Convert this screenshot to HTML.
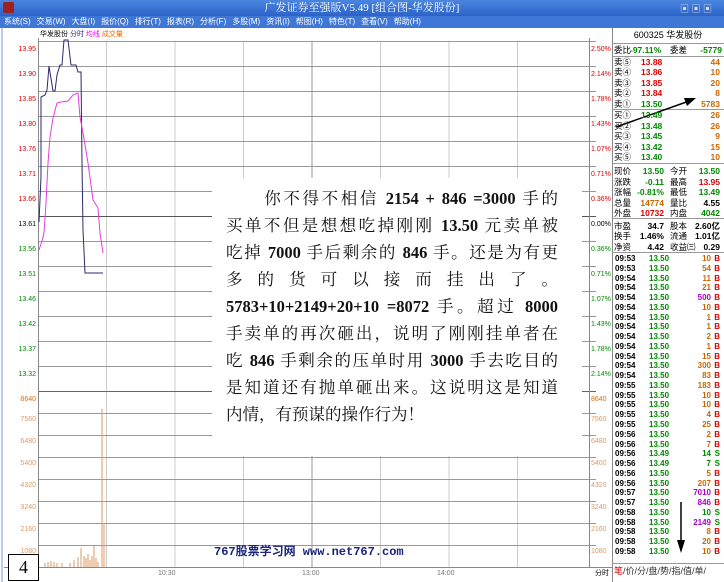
<!DOCTYPE html>
<html><head><meta charset="utf-8"><style>
*{margin:0;padding:0;box-sizing:border-box}
body{width:724px;height:582px;overflow:hidden;background:#fff;font-family:"Liberation Sans","Noto Sans CJK SC",sans-serif;position:relative}
.a{position:absolute;white-space:nowrap}
#title{left:0;top:0;width:724px;height:16px;background:linear-gradient(#4a86e0,#2c62c8);color:#fff;font-size:11px;text-align:center;line-height:16px;font-family:"Liberation Serif","Noto Serif CJK SC",serif}
#menu{left:0;top:16px;width:724px;height:12px;background:#3f77d6;color:#fff;font-size:8px;line-height:12px;padding-left:4px;word-spacing:0}
#menu span{margin-right:6px}
.lab{font-size:7px;line-height:8px}
.rp{font-size:8.5px;line-height:10px;font-weight:bold}
.r{color:#d00}.g{color:#080}.k{color:#000}.o{color:#c60}.p{color:#a0c}
#txt{left:212px;top:178px;width:370px;height:278px;background:#fff;padding:7px 0 0 14px}
#txt div{width:332px;height:27px;line-height:27px;font-size:16.5px;font-family:"Liberation Serif","Noto Serif CJK SC",serif;text-align:justify;text-align-last:justify;color:#111}
#txt b{font-weight:bold}
</style></head><body>
<div class="a" id="title">广发证券至强版V5.49 [组合图-华发股份]</div>
<div class="a" style="left:3px;top:2px;width:11px;height:11px;background:#a02020;border-radius:2px"></div>
<div class="a" style="left:680px;top:2px;width:40px;height:12px;color:#ddd;font-size:9px">▣ ▣ ▣</div>
<div class="a" id="menu"><span>系统(S)</span><span>交易(W)</span><span>大盘(I)</span><span>报价(Q)</span><span>排行(T)</span><span>报表(R)</span><span>分析(F)</span><span>多股(M)</span><span>资讯(I)</span><span>帮图(H)</span><span>特色(T)</span><span>查看(V)</span><span>帮助(H)</span></div>

<svg class="a" style="left:0;top:28px" width="612" height="554" viewBox="0 28 612 554">
<rect x="0" y="28" width="612" height="554" fill="#fff"/>
<line x1="2" y1="28" x2="2" y2="582" stroke="#7a9ad0"/>
<g stroke="#ccc" stroke-width="1">
<line x1="106.5" y1="41" x2="106.5" y2="567"/><line x1="175" y1="41" x2="175" y2="567"/><line x1="243.5" y1="41" x2="243.5" y2="567"/><line x1="312" y1="41" x2="312" y2="567" stroke="#999"/><line x1="380.5" y1="41" x2="380.5" y2="567"/><line x1="449" y1="41" x2="449" y2="567"/><line x1="517.5" y1="41" x2="517.5" y2="567"/>
</g>
<g stroke="#999" stroke-width="1">
<line x1="38" y1="41.5" x2="596" y2="41.5"/><line x1="38" y1="66.5" x2="596" y2="66.5"/><line x1="38" y1="91.5" x2="596" y2="91.5"/><line x1="38" y1="116.5" x2="596" y2="116.5"/><line x1="38" y1="141.5" x2="596" y2="141.5"/><line x1="38" y1="166.5" x2="596" y2="166.5"/><line x1="38" y1="191.5" x2="596" y2="191.5"/><line x1="38" y1="216.5" x2="596" y2="216.5" stroke="#555"/><line x1="38" y1="241.5" x2="596" y2="241.5"/><line x1="38" y1="266.5" x2="596" y2="266.5"/><line x1="38" y1="291.5" x2="596" y2="291.5"/><line x1="38" y1="316.5" x2="596" y2="316.5"/><line x1="38" y1="341.5" x2="596" y2="341.5"/><line x1="38" y1="366.5" x2="596" y2="366.5"/><line x1="38" y1="391.5" x2="596" y2="391.5" stroke="#666"/>
<line x1="38" y1="413.5" x2="596" y2="413.5"/><line x1="38" y1="435.5" x2="596" y2="435.5"/><line x1="38" y1="457.5" x2="596" y2="457.5"/><line x1="38" y1="479.5" x2="596" y2="479.5"/><line x1="38" y1="501.5" x2="596" y2="501.5"/><line x1="38" y1="523.5" x2="596" y2="523.5"/><line x1="38" y1="545.5" x2="596" y2="545.5"/>
</g>
<line x1="38.5" y1="38" x2="38.5" y2="567" stroke="#888"/>
<line x1="589.5" y1="38" x2="589.5" y2="567" stroke="#888"/>
<line x1="4" y1="567.5" x2="612" y2="567.5" stroke="#888"/>
<polyline fill="none" stroke="#2a2a6a" stroke-width="1" points="39,222 41,177 41,97 45,95 47,90 49,66 53,91 55,91 57,75 60,65 62,65 64,40 68,40 71,65 76,65 78,72 81,72 82,163 83,230 85,273 103,273"/>
<polyline fill="none" stroke="#e040e0" stroke-width="1" points="39,250 42,241 44,233 46,203 48,163 50,137 53,118 57,103 61,102 68,101 73,95 78,93 80,117 83,133 88,163 93,200 98,208 100,233 103,253"/>
<g stroke="#d96" stroke-width="1">
<line x1="45" y1="567" x2="45" y2="563"/><line x1="48" y1="567" x2="48" y2="562"/><line x1="51" y1="567" x2="51" y2="561"/><line x1="54" y1="567" x2="54" y2="562"/><line x1="57" y1="567" x2="57" y2="563"/><line x1="62" y1="567" x2="62" y2="563"/><line x1="70" y1="567" x2="70" y2="563"/><line x1="74" y1="567" x2="74" y2="560"/><line x1="78" y1="567" x2="78" y2="557"/><line x1="81" y1="567" x2="81" y2="548"/><line x1="84" y1="567" x2="84" y2="556"/><line x1="86" y1="567" x2="86" y2="558"/><line x1="88" y1="567" x2="88" y2="554"/><line x1="90" y1="567" x2="90" y2="560"/><line x1="92" y1="567" x2="92" y2="556"/><line x1="94" y1="567" x2="94" y2="545"/><line x1="96" y1="567" x2="96" y2="558"/><line x1="98" y1="567" x2="98" y2="562"/>
<line x1="102" y1="567" x2="102" y2="409"/><line x1="104" y1="567" x2="104" y2="523"/>
</g>
</svg>

<div class="a lab" style="left:40px;top:31px;font-size:7px;color:#000">华发股份 <span style="color:#22a">分时</span> <span style="color:#e0e">均线</span> <span style="color:#e60">成交量</span></div>
<div class="a lab" style="left:0;top:37px;width:36px;text-align:right;line-height:25px">
<div class="r">13.95</div><div class="r">13.90</div><div class="r">13.85</div><div class="r">13.80</div><div class="r">13.76</div><div class="r">13.71</div><div class="r">13.66</div><div class="k">13.61</div><div class="g">13.56</div><div class="g">13.51</div><div class="g">13.46</div><div class="g">13.42</div><div class="g">13.37</div><div class="g">13.32</div><div class="r" style="color:#e60">8640</div></div>
<div class="a lab" style="left:0;top:409px;width:36px;text-align:right;line-height:22px;color:#d96">
<div>7560</div><div>6480</div><div>5400</div><div>4320</div><div>3240</div><div>2160</div><div>1080</div></div>
<div class="a lab" style="left:591px;top:37px;line-height:25px">
<div class="r">2.50%</div><div class="r">2.14%</div><div class="r">1.78%</div><div class="r">1.43%</div><div class="r">1.07%</div><div class="r">0.71%</div><div class="r">0.36%</div><div class="k">0.00%</div><div class="g">0.36%</div><div class="g">0.71%</div><div class="g">1.07%</div><div class="g">1.43%</div><div class="g">1.78%</div><div class="g">2.14%</div><div style="color:#e60">8640</div></div>
<div class="a lab" style="left:591px;top:409px;line-height:22px;color:#d96">
<div>7560</div><div>6480</div><div>5400</div><div>4320</div><div>3240</div><div>2160</div><div>1080</div></div>
<div class="a lab" style="left:20px;top:570px;color:#777">09:30</div>
<div class="a lab" style="left:158px;top:570px;color:#777">10:30</div>
<div class="a lab" style="left:302px;top:570px;color:#777">13:00</div>
<div class="a lab" style="left:437px;top:570px;color:#777">14:00</div>
<div class="a lab" style="left:595px;top:570px;color:#000">分时</div>

<div class="a" id="txt">
<div>&#12288;&#12288;你不得不相信 <b>2154 + 846 =3000</b> 手的</div>
<div>买单不但是想想吃掉刚刚 <b>13.50</b> 元卖单被</div>
<div>吃掉 <b>7000</b> 手后剩余的 <b>846</b> 手。还是为有更</div>
<div>多 的 货 可 以 接 而 挂 出 了 。</div>
<div><b>5783+10+2149+20+10 =8072</b> 手。超过 <b>8000</b></div>
<div>手卖单的再次砸出，说明了刚刚挂单者在</div>
<div>吃 <b>846</b> 手剩余的压单时用 <b>3000</b> 手去吃目的</div>
<div>是知道还有抛单砸出来。这说明这是知道</div>
<div style="text-align-last:left">内情，有预谋的操作行为！</div>
</div>

<div class="a" style="left:8px;top:554px;width:31px;height:27px;border:1px solid #000;background:#fff;font-family:'Liberation Serif',serif;font-size:18px;text-align:center;line-height:25px">4</div>
<div class="a" style="left:214px;top:542px;font-size:12px;font-weight:bold;color:#1a237e;font-family:'Liberation Mono','Noto Sans CJK SC',monospace">767股票学习网 www.net767.com</div>

<!-- right panel -->
<div class="a" style="left:612px;top:28px;width:112px;height:554px;border-left:1px solid #888;background:#fff"></div>
<div class="a rp" style="left:612px;top:30px;width:112px;text-align:center;font-weight:normal;font-size:9px">600325 华发股份</div>
<svg class="a" style="left:612px;top:28px" width="112" height="554">
<g stroke="#999"><line x1="0" y1="15.5" x2="112" y2="15.5"/><line x1="0" y1="28.5" x2="112" y2="28.5"/><line x1="0" y1="81.5" x2="112" y2="81.5"/><line x1="0" y1="135.5" x2="112" y2="135.5"/><line x1="0" y1="190.5" x2="112" y2="190.5"/><line x1="0" y1="224.5" x2="112" y2="224.5"/><line x1="0" y1="535.5" x2="112" y2="535.5"/></g>
<line x1="4" y1="99" x2="80" y2="72" stroke="#000" stroke-width="1.5"/><polygon points="84,70 72,70 75,78" fill="#000"/>
<line x1="69" y1="474" x2="69" y2="518" stroke="#000" stroke-width="1.5"/><polygon points="69,525 65,512 73,512" fill="#000"/>
</svg>
<div class="a rp" style="left:614px;top:45px;width:108px">
<div style="position:relative;height:10px"><span style="font-weight:normal">委比</span><span class="g" style="position:absolute;left:16px">-97.11%</span><span style="position:absolute;left:56px;font-weight:normal">委差</span><span class="g" style="position:absolute;right:0">-5779</span></div>
</div>
<div class="a rp" style="left:614px;top:57px;width:106px">
<div style="position:relative;height:10.4px"><span style="font-weight:normal">卖⑤</span><span class="r" style="position:absolute;left:27px">13.88</span><span class="o" style="position:absolute;right:0">44</span></div>
<div style="position:relative;height:10.4px"><span style="font-weight:normal">卖④</span><span class="r" style="position:absolute;left:27px">13.86</span><span class="o" style="position:absolute;right:0">10</span></div>
<div style="position:relative;height:10.4px"><span style="font-weight:normal">卖③</span><span class="r" style="position:absolute;left:27px">13.85</span><span class="o" style="position:absolute;right:0">20</span></div>
<div style="position:relative;height:10.4px"><span style="font-weight:normal">卖②</span><span class="r" style="position:absolute;left:27px">13.84</span><span class="o" style="position:absolute;right:0">8</span></div>
<div style="position:relative;height:10.4px"><span style="font-weight:normal">卖①</span><span class="g" style="position:absolute;left:27px">13.50</span><span class="o" style="position:absolute;right:0">5783</span></div>
</div>
<div class="a rp" style="left:614px;top:110px;width:106px">
<div style="position:relative;height:10.6px"><span style="font-weight:normal">买①</span><span class="g" style="position:absolute;left:27px">13.49</span><span class="o" style="position:absolute;right:0">26</span></div>
<div style="position:relative;height:10.6px"><span style="font-weight:normal">买②</span><span class="g" style="position:absolute;left:27px">13.48</span><span class="o" style="position:absolute;right:0">26</span></div>
<div style="position:relative;height:10.6px"><span style="font-weight:normal">买③</span><span class="g" style="position:absolute;left:27px">13.45</span><span class="o" style="position:absolute;right:0">9</span></div>
<div style="position:relative;height:10.6px"><span style="font-weight:normal">买④</span><span class="g" style="position:absolute;left:27px">13.42</span><span class="o" style="position:absolute;right:0">15</span></div>
<div style="position:relative;height:10.6px"><span style="font-weight:normal">买⑤</span><span class="g" style="position:absolute;left:27px">13.40</span><span class="o" style="position:absolute;right:0">10</span></div>
</div>
<div class="a rp" style="left:614px;top:166px;width:106px">
<div style="position:relative;height:10.6px"><span style="font-weight:normal">现价</span><span class="g" style="position:absolute;right:56px">13.50</span><span style="position:absolute;left:56px;font-weight:normal">今开</span><span class="g" style="position:absolute;right:0">13.50</span></div>
<div style="position:relative;height:10.6px"><span style="font-weight:normal">涨跌</span><span class="g" style="position:absolute;right:56px">-0.11</span><span style="position:absolute;left:56px;font-weight:normal">最高</span><span class="r" style="position:absolute;right:0">13.95</span></div>
<div style="position:relative;height:10.6px"><span style="font-weight:normal">涨幅</span><span class="g" style="position:absolute;right:56px">-0.81%</span><span style="position:absolute;left:56px;font-weight:normal">最低</span><span class="g" style="position:absolute;right:0">13.49</span></div>
<div style="position:relative;height:10.6px"><span style="font-weight:normal">总量</span><span class="o" style="position:absolute;right:56px">14774</span><span style="position:absolute;left:56px;font-weight:normal">量比</span><span class="k" style="position:absolute;right:0">4.55</span></div>
<div style="position:relative;height:10.6px"><span style="font-weight:normal">外盘</span><span class="r" style="position:absolute;right:56px">10732</span><span style="position:absolute;left:56px;font-weight:normal">内盘</span><span class="g" style="position:absolute;right:0">4042</span></div>
</div>
<div class="a rp" style="left:614px;top:221px;width:106px">
<div style="position:relative;height:10.3px"><span style="font-weight:normal">市盈</span><span style="position:absolute;right:56px">34.7</span><span style="position:absolute;left:56px;font-weight:normal">股本</span><span style="position:absolute;right:0">2.60亿</span></div>
<div style="position:relative;height:10.3px"><span style="font-weight:normal">换手</span><span style="position:absolute;right:56px">1.46%</span><span style="position:absolute;left:56px;font-weight:normal">流通</span><span style="position:absolute;right:0">1.01亿</span></div>
<div style="position:relative;height:10.3px"><span style="font-weight:normal">净资</span><span style="position:absolute;right:56px">4.42</span><span style="position:absolute;left:56px;font-weight:normal">收益㈢</span><span style="position:absolute;right:0">0.29</span></div>
</div>
<div class="a rp" id="ticks" style="left:615px;top:254px;width:105px;font-size:8px;line-height:9.77px"></div>
<script>
var t=[["09:53","13.50","10","B","o"],["09:53","13.50","54","B","o"],["09:54","13.50","11","B","o"],["09:54","13.50","21","B","o"],["09:54","13.50","500","B","p"],["09:54","13.50","10","B","o"],["09:54","13.50","1","B","o"],["09:54","13.50","1","B","o"],["09:54","13.50","2","B","o"],["09:54","13.50","1","B","o"],["09:54","13.50","15","B","o"],["09:54","13.50","300","B","o"],["09:54","13.50","83","B","o"],["09:55","13.50","183","B","o"],["09:55","13.50","10","B","o"],["09:55","13.50","10","B","o"],["09:55","13.50","4","B","o"],["09:55","13.50","25","B","o"],["09:56","13.50","2","B","o"],["09:56","13.50","7","B","o"],["09:56","13.49","14","S","g"],["09:56","13.49","7","S","g"],["09:56","13.50","5","B","o"],["09:56","13.50","207","B","o"],["09:57","13.50","7010","B","p"],["09:57","13.50","846","B","p"],["09:58","13.50","10","S","g"],["09:58","13.50","2149","S","p"],["09:58","13.50","8","B","o"],["09:58","13.50","20","B","o"],["09:58","13.50","10","B","o"]];
var h="";t.forEach(function(r){h+='<div style="position:relative;height:9.77px"><span>'+r[0]+'</span><span class="g" style="position:absolute;left:34px">'+r[1]+'</span><span class="'+r[4]+'" style="position:absolute;right:9px">'+r[2]+'</span><span class="'+(r[3]=="B"?"r":"g")+'" style="position:absolute;right:0">'+r[3]+'</span></div>';});
document.getElementById("ticks").innerHTML=h;
</script>
<div class="a" style="left:614px;top:566px;font-size:9px;line-height:11px;color:#333">
<span style="color:#d00">笔</span>/价/分/盘/势/指/值/单/</div>
</body></html>
